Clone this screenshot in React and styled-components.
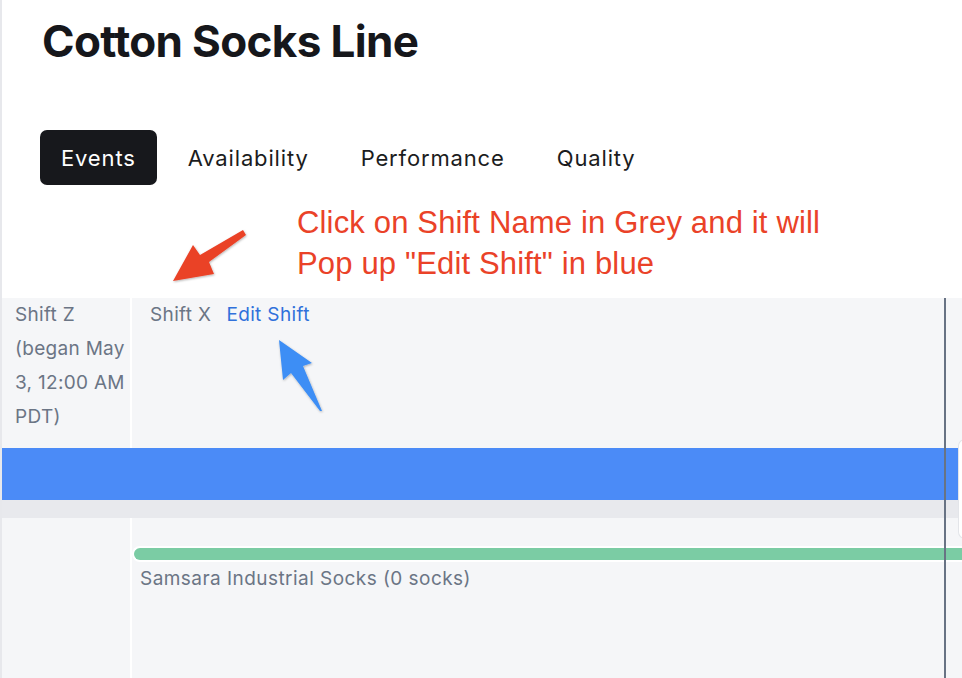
import React from "react";
import styled, { createGlobalStyle } from "styled-components";

const GlobalStyle = createGlobalStyle`
  html, body {
    margin: 0;
    padding: 0;
    background: #ffffff;
  }
  body {
    font-family: Inter, "Noto Sans", sans-serif;
    -webkit-font-smoothing: antialiased;
  }
  * {
    box-sizing: border-box;
  }
`;

const Page = styled.div`
  position: relative;
  width: 962px;
  height: 678px;
  overflow: hidden;
  border-left: 2px solid #e7e8ec;
  display: flex;
  flex-direction: column;
`;

const Header = styled.header`
  padding: 19px 0 0 40px;
`;

const Title = styled.h1`
  margin: 0;
  font-family: Inter, sans-serif;
  font-weight: 700;
  font-size: 44px;
  line-height: 44px;
  letter-spacing: -0.65px;
  color: #16171b;
`;

const Tabs = styled.nav`
  display: flex;
  gap: 10px;
  margin: 67px 0 0 -2px;
`;

const Tab = styled.div`
  height: 55px;
  padding: 0 21px;
  display: flex;
  align-items: center;
  border-radius: 7px;
  font-size: 22px;
  letter-spacing: 0.85px;
  color: ${({ active }) => (active ? "#ffffff" : "#1b1c20")};
  background: ${({ active }) => (active ? "#17181c" : "transparent")};
`;

const Note = styled.div`
  height: 113px;
  padding: 17px 0 0 295px;
  font-family: "Liberation Sans", Arial, sans-serif;
  font-size: 31px;
  line-height: 41px;
  letter-spacing: 0.16px;
  color: #ea4228;
`;

const Timeline = styled.section`
  position: relative;
  flex: 1;
  background: #f5f6f8;
  display: flex;
  flex-direction: column;
`;

const Row = styled.div`
  display: grid;
  grid-template-columns: 130px 1fr;
  height: ${({ h }) => h || "auto"};
  flex: ${({ grow }) => (grow ? 1 : "none")};
`;

const SideCell = styled.div`
  border-right: 2px solid #ffffff;
  padding: 0 4px 0 13px;
  font-size: 19px;
  line-height: 34px;
  letter-spacing: 0.3px;
  color: #6b7585;
`;

const MainCell = styled.div`
  padding: ${({ pad }) => pad || "0"};
  display: flex;
  flex-direction: ${({ column }) => (column ? "column" : "row")};
  gap: ${({ gap }) => gap || "0"};
  font-size: 19px;
  line-height: 34px;
  letter-spacing: 0.35px;
  color: #6b7585;
  min-width: 0;
`;

const EditLink = styled.a`
  color: #3071db;
  cursor: pointer;
`;

const Band = styled.div`
  height: ${({ h }) => h};
  background: ${({ color }) => color};
`;

const ProductBar = styled.div`
  height: 16px;
  background: #7bcca4;
  border: 2px solid #ffffff;
  border-right: none;
  border-radius: 8px 0 0 8px;
`;

const ProductLabel = styled.div`
  padding-left: 8px;
  letter-spacing: 0.45px;
`;

const NowLine = styled.div`
  position: absolute;
  top: 0;
  bottom: 0;
  left: 942px;
  width: 2px;
  background: #687384;
`;

const SideCard = styled.div`
  position: absolute;
  top: 142px;
  left: 957px;
  width: 40px;
  height: 98px;
  background: #ffffff;
  border-radius: 6px;
  box-shadow: 0 0 0 1px #e3e5e9;
`;

const Markup = styled.svg`
  position: absolute;
  top: 0;
  left: -2px;
  pointer-events: none;
`;

const tabs = ["Events", "Availability", "Performance", "Quality"];

export default function App() {
  return (
    <>
      <GlobalStyle />
      <Page>
        <Header>
          <Title>Cotton Socks Line</Title>
          <Tabs>
            {tabs.map((t, i) => (
              <Tab key={t} active={i === 0}>
                {t}
              </Tab>
            ))}
          </Tabs>
        </Header>

        <Note>
          Click on Shift Name in Grey and it will
          <br />
          Pop up "Edit Shift" in blue
        </Note>

        <Timeline>
          <Row h="150px">
            <SideCell>
              Shift Z
              <br />
              (began May
              <br />
              3, 12:00 AM
              <br />
              PDT)
            </SideCell>
            <MainCell pad="0 0 0 18px" gap="15px">
              <span>Shift X</span>
              <EditLink>Edit Shift</EditLink>
            </MainCell>
          </Row>
          <Band h="52px" color="#4b8bf7" />
          <Band h="18px" color="#e8e9ed" />
          <Row grow>
            <SideCell />
            <MainCell column pad="28px 0 0 0">
              <ProductBar />
              <ProductLabel>Samsara Industrial Socks (0 socks)</ProductLabel>
            </MainCell>
          </Row>
          <NowLine />
          <SideCard />
        </Timeline>

        <Markup width="962" height="678" viewBox="0 0 962 678">
          <defs>
            <filter id="shade" x="-20%" y="-20%" width="140%" height="140%">
              <feDropShadow dx="0.6" dy="1" stdDeviation="0.8" floodOpacity="0.3" />
            </filter>
          </defs>
          <polygon
            points="243,230 246,235 209,262 214,274 173,281 193,245 200,255"
            fill="#ea4228"
            filter="url(#shade)"
          />
          <polygon
            points="279,340 312,363 303,366 322,411 320,411 291,373 283,380"
            fill="#3d8ef5"
            filter="url(#shade)"
          />
        </Markup>
      </Page>
    </>
  );
}
